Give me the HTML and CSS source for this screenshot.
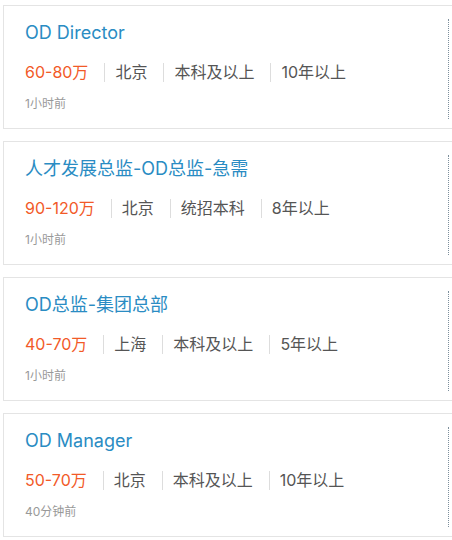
FILE: index.html
```html
<!DOCTYPE html>
<html>
<head>
  <meta charset="utf-8">
  <title>职位列表</title>
  <link rel="stylesheet" href="styles.css">
</head>
<body>
<div class="job-list">

  <div class="job-card">
    <div class="job-info">
      <div class="job-title">OD Director</div>
      <div class="job-meta">
        <span class="salary">60-80万</span>
        <span>北京</span>
        <span>本科及以上</span>
        <span>10年以上</span>
      </div>
      <div class="job-time">1小时前</div>
    </div>
    <div class="job-side"></div>
  </div>

  <div class="job-card">
    <div class="job-info">
      <div class="job-title">人才发展总监-OD总监-急需</div>
      <div class="job-meta">
        <span class="salary">90-120万</span>
        <span>北京</span>
        <span>统招本科</span>
        <span>8年以上</span>
      </div>
      <div class="job-time">1小时前</div>
    </div>
    <div class="job-side"></div>
  </div>

  <div class="job-card">
    <div class="job-info">
      <div class="job-title">OD总监-集团总部</div>
      <div class="job-meta">
        <span class="salary">40-70万</span>
        <span>上海</span>
        <span>本科及以上</span>
        <span>5年以上</span>
      </div>
      <div class="job-time">1小时前</div>
    </div>
    <div class="job-side"></div>
  </div>

  <div class="job-card">
    <div class="job-info">
      <div class="job-title">OD Manager</div>
      <div class="job-meta">
        <span class="salary">50-70万</span>
        <span>北京</span>
        <span>本科及以上</span>
        <span>10年以上</span>
      </div>
      <div class="job-time">40分钟前</div>
    </div>
    <div class="job-side"></div>
  </div>

</div>
</body>
</html>
```

FILE: styles.css
```css
html, body {
  overflow: hidden;
}

body {
  margin: 0;
  background-color: #fff;
  font-family: Inter, "Noto Sans CJK SC", sans-serif;
}

.job-list {
  padding: 5px 0 0 3px;
}

.job-card {
  display: flex;
  width: 600px;
  margin-bottom: 12px;
  border: 1px solid #e4e4e4;
}

.job-info {
  width: 423px;
  flex-shrink: 0;
  padding: 15px 0 16px 21px;
}

.job-title {
  font-size: 18px;
  line-height: 24px;
  color: #2a8cc3;
  margin-bottom: 15px;
}

.job-meta {
  display: flex;
  font-size: 16px;
  line-height: 24px;
  color: #555;
}

.job-meta span {
  position: relative;
  padding: 0 16px 0 11px;
}

.job-meta span + span::before {
  content: "";
  position: absolute;
  left: 0;
  top: 3px;
  height: 19px;
  border-left: 1px solid #ddd;
}

.job-meta .salary {
  padding-left: 0;
  color: #f25a28;
}

.job-time {
  margin-top: 12px;
  font-size: 12px;
  line-height: 16px;
  color: #999;
}

.job-side {
  flex: 1;
  margin: 13px 0 9px;
  border-left: 1px dotted #7d8f9c;
}
```
